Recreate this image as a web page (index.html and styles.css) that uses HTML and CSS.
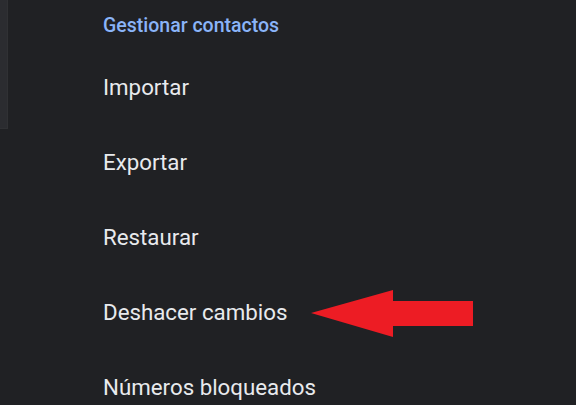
FILE: index.html
```html
<!DOCTYPE html>
<html lang="es">
<head>
<meta charset="utf-8">
<title>Gestionar contactos</title>
<link rel="stylesheet" href="styles.css">
</head>
<body>
<div class="screen">
  <div class="rail"></div>
  <div class="menu">
    <div class="header">Gestionar contactos</div>
    <div class="item">Importar</div>
    <div class="item">Exportar</div>
    <div class="item">Restaurar</div>
    <div class="item">Deshacer cambios</div>
    <div class="item">Números bloqueados</div>
  </div>
  <svg class="arrow" width="163" height="48" viewBox="0 0 163 48">
    <polygon points="0,23 82,0 82,11 162,11 162,36 82,36 82,47" fill="#ed1c24"/>
  </svg>
</div>
</body>
</html>
```

FILE: styles.css
```css
html, body {
  margin: 0;
  padding: 0;
  background: #202124;
  overflow: hidden;
}
.screen {
  position: relative;
  display: flex;
  align-items: flex-start;
  width: 576px;
  height: 405px;
  overflow: hidden;
  font-family: Roboto, "Liberation Sans", sans-serif;
}
.rail {
  width: 7px;
  height: 128px;
  background: #2b2c30;
  border-right: 1px solid #303134;
  border-bottom: 1px solid #303134;
  flex: none;
}
.menu {
  margin-left: 95px;
  display: flex;
  flex-direction: column;
}
.header {
  padding-top: 2px;
  height: 48px;
  line-height: 48px;
  font-size: 19.5px;
  font-weight: 500;
  color: #8ab4f8;
  white-space: nowrap;
}
.item {
  height: 75px;
  line-height: 75px;
  font-size: 22.3px;
  color: #e8eaed;
  white-space: nowrap;
}
.arrow {
  position: absolute;
  left: 311px;
  top: 290px;
}
```
